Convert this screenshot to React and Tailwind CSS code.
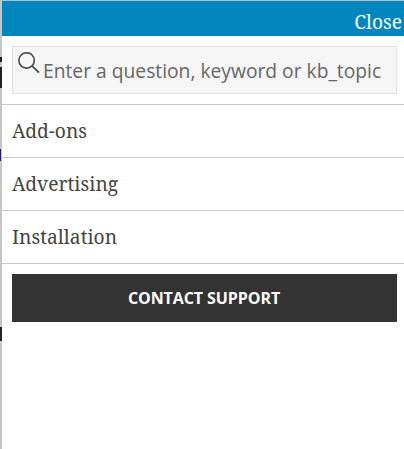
import React, { useState } from 'react';

const topics = ['Add-ons', 'Advertising', 'Installation'];

const SearchIcon = () => (
    <svg width="22" height="22" viewBox="0 0 22 22" fill="none" stroke="#4a4a4a" strokeWidth="1.6">
        <circle cx="8.6" cy="8.4" r="7.7" />
        <path d="M14 13.8L21 20.6" strokeWidth="1.8" />
    </svg>
);

// Sliver of the page that stays visible beside the open drawer
const PageEdge = () => (
    <div className="w-0.5 shrink-0 bg-[#c6c6c6]">
        <div className="mt-[56px] h-[5px] bg-[#222]"></div>
        <div className="mt-[5px] h-[21px] bg-[#222]"></div>
        <div className="mt-[61px] h-3 w-px bg-[#1e1e70]"></div>
        <div className="mt-[166px] h-3.5 bg-[#202833]"></div>
    </div>
);

const App = () => {
    const [query, setQuery] = useState('');

    return (
        <div className="flex h-[449px] w-[404px] overflow-hidden border-t border-[#b5bfc2] bg-white font-['Noto_Serif','DejaVu_Serif_Condensed','DejaVu_Serif',serif]">
            <PageEdge />
            <div className="flex-1">
                <div className="flex h-[35px] justify-end bg-[#0085be] pr-0.5">
                    <button className="pt-[7px] text-[19.2px] leading-[28px] text-white">Close</button>
                </div>
                <div className="px-2.5 pr-[7px] pt-2.5 pb-2.5">
                    <label className="flex h-12 border border-[#e2e2e2] bg-[#f6f6f6] pl-[5px]">
                        <span className="mt-[5px] shrink-0"><SearchIcon /></span>
                        <input
                            value={query}
                            onChange={(e) => setQuery(e.target.value)}
                            placeholder="Enter a question, keyword or kb_topic"
                            className="ml-[3px] w-full min-w-0 bg-transparent pt-0.5 font-['Open_Sans',sans-serif] text-[19.25px] text-[#666] outline-none placeholder:text-[#666]"
                        />
                    </label>
                </div>
                <ul className="border-t border-[#c8c8c8]">
                    {topics.map((topic) => (
                        <li key={topic} className="flex h-[53px] items-center border-b border-[#c8c8c8] pl-2.5">
                            <a href="#" className="text-[19.2px] tracking-[0.04px] text-[#444]">{topic}</a>
                        </li>
                    ))}
                </ul>
                <div className="pt-2.5 pr-[7px] pl-2.5">
                    <button className="h-12 w-full bg-[#333] pr-px font-['Open_Sans',sans-serif] text-base font-bold tracking-[-0.08px] text-white">
                        CONTACT SUPPORT
                    </button>
                </div>
            </div>
        </div>
    );
};

export default App;
